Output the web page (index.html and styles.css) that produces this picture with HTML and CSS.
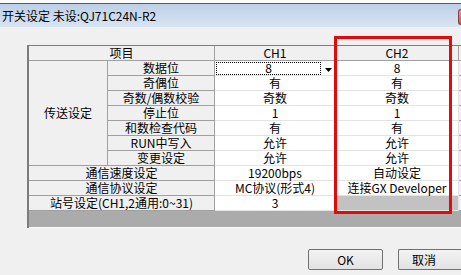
FILE: index.html
```html
<!DOCTYPE html>
<html>
<head>
<meta charset="utf-8">
<link rel="stylesheet" href="styles.css">
</head>
<body>
<div class="window">
  <div class="behind"></div>
  <div class="titlebar">
    <span class="title">开关设定 未设:QJ71C24N-R2</span>
    <span class="close"></span>
  </div>
  <div class="dialog">
    <div class="sheet">
      <div class="grid">
        <div class="cell head span2">项目</div>
        <div class="cell head">CH1</div>
        <div class="cell head">CH2</div>
        <div class="cell head rest"></div>

        <div class="cell group">传送设定</div>
        <div class="cell label">数据位</div>
        <div class="cell data combo"><span class="focusbox">8</span><span class="drop"><svg width="7" height="4" viewBox="0 0 7 4"><path d="M0 0h7L3.5 4z" fill="#000"/></svg></span></div>
        <div class="cell data">8</div>
        <div class="cell rest"></div>

        <div class="cell label">奇偶位</div>
        <div class="cell data">有</div>
        <div class="cell data">有</div>
        <div class="cell rest"></div>

        <div class="cell label">奇数/偶数校验</div>
        <div class="cell data">奇数</div>
        <div class="cell data">奇数</div>
        <div class="cell rest"></div>

        <div class="cell label">停止位</div>
        <div class="cell data">1</div>
        <div class="cell data">1</div>
        <div class="cell rest"></div>

        <div class="cell label">和数检查代码</div>
        <div class="cell data">有</div>
        <div class="cell data">有</div>
        <div class="cell rest"></div>

        <div class="cell label">RUN中写入</div>
        <div class="cell data">允许</div>
        <div class="cell data">允许</div>
        <div class="cell rest"></div>

        <div class="cell label">变更设定</div>
        <div class="cell data">允许</div>
        <div class="cell data">允许</div>
        <div class="cell rest"></div>

        <div class="cell label span2">通信速度设定</div>
        <div class="cell data">19200bps</div>
        <div class="cell data">自动设定</div>
        <div class="cell rest"></div>

        <div class="cell label span2">通信协议设定</div>
        <div class="cell data">MC协议(形式4)</div>
        <div class="cell data">连接GX Developer</div>
        <div class="cell rest"></div>

        <div class="cell label span2">站号设定(CH1,2通用:0~31)</div>
        <div class="cell data">3</div>
        <div class="cell data off"></div>
        <div class="cell rest"></div>
      </div>
      <div class="blank"></div>
    </div>
    <div class="buttons">
      <button class="btn">OK</button>
      <button class="btn cut">取消</button>
    </div>
  </div>
  <div class="mark"></div>
</div>
</body>
</html>
```

FILE: styles.css
```css
* {
  margin: 0;
  padding: 0;
  box-sizing: border-box;
}
body {
  width: 461px;
  height: 275px;
  overflow: hidden;
  background: #f0f0f0;
  font-family: "Noto Sans CJK SC", "Liberation Sans", sans-serif;
  font-size: 12px;
  color: #000;
}
.window {
  position: relative;
  width: 461px;
  height: 275px;
  overflow: hidden;
  display: flex;
  flex-direction: column;
}
.behind {
  height: 4px;
  background: #fbfbfb;
  border-bottom: 1px solid #5a5a5a;
}
.titlebar {
  height: 23px;
  display: flex;
  align-items: center;
  justify-content: space-between;
  background: linear-gradient(#bccfe7, #d9e4f2);
  padding-left: 2px;
}
.title {
  font-size: 12px;
  line-height: 16px;
}
.close {
  width: 3px;
  height: 16px;
  margin-top: 2px;
  border: 1px solid #8a4040;
  border-right: none;
  border-radius: 3px 0 0 3px;
  background: linear-gradient(#e8a39a, #c9564b);
}
.dialog {
  flex: 1;
  display: flex;
  flex-direction: column;
}
.sheet {
  margin-top: 18px;
  margin-left: 27px;
  width: 434px;
  border-left: 2px solid #7c7c7c;
  border-top: 1px solid #7c7c7c;
}
.grid {
  display: grid;
  grid-template-columns: 79px 107px 121px 123px 2px;
  grid-auto-rows: 15px;
}
.cell {
  display: flex;
  align-items: center;
  justify-content: center;
  line-height: 14px;
  white-space: nowrap;
  border-right: 1px solid #a0a0a0;
  border-bottom: 1px solid #a0a0a0;
  background: #f0f0f0;
}
.span2 {
  grid-column: span 2;
}
.group {
  grid-row: span 7;
}
.data {
  background: #fff;
  border-right-color: #e3e3e3;
  border-bottom-color: #e3e3e3;
}
.rest {
  background: #f0f0f0;
  border-right: none;
}
.off {
  background: #c2c2c2;
}
.combo {
  justify-content: space-between;
  padding-left: 1px;
}
.focusbox {
  flex: 1;
  height: 13px;
  display: flex;
  align-items: center;
  justify-content: center;
  border: 1px dotted #000;
}
.drop {
  width: 14px;
  height: 14px;
  display: flex;
  align-items: center;
  justify-content: center;
  padding-top: 3px;
}
.blank {
  height: 17px;
  background: #ababab;
  border-bottom: 1px solid #fafafa;
}
.buttons {
  display: flex;
  gap: 15px;
  padding-left: 308px;
  margin-top: 21px;
}
.btn {
  flex: none;
  width: 75px;
  height: 21px;
  font-family: "Noto Sans CJK SC", "Liberation Sans", sans-serif;
  font-size: 12px;
  line-height: 14px;
  background: linear-gradient(#f2f2f2, #e3e3e3);
  border: 1px solid #707070;
  border-radius: 2px;
  color: #000;
}
.cut {
  width: 63px;
  padding-right: 12px;
  border-right: none;
  border-radius: 2px 0 0 2px;
}
.mark {
  position: absolute;
  left: 334px;
  top: 36px;
  width: 118px;
  height: 178px;
  border: 3px solid #e20b0b;
}
```
